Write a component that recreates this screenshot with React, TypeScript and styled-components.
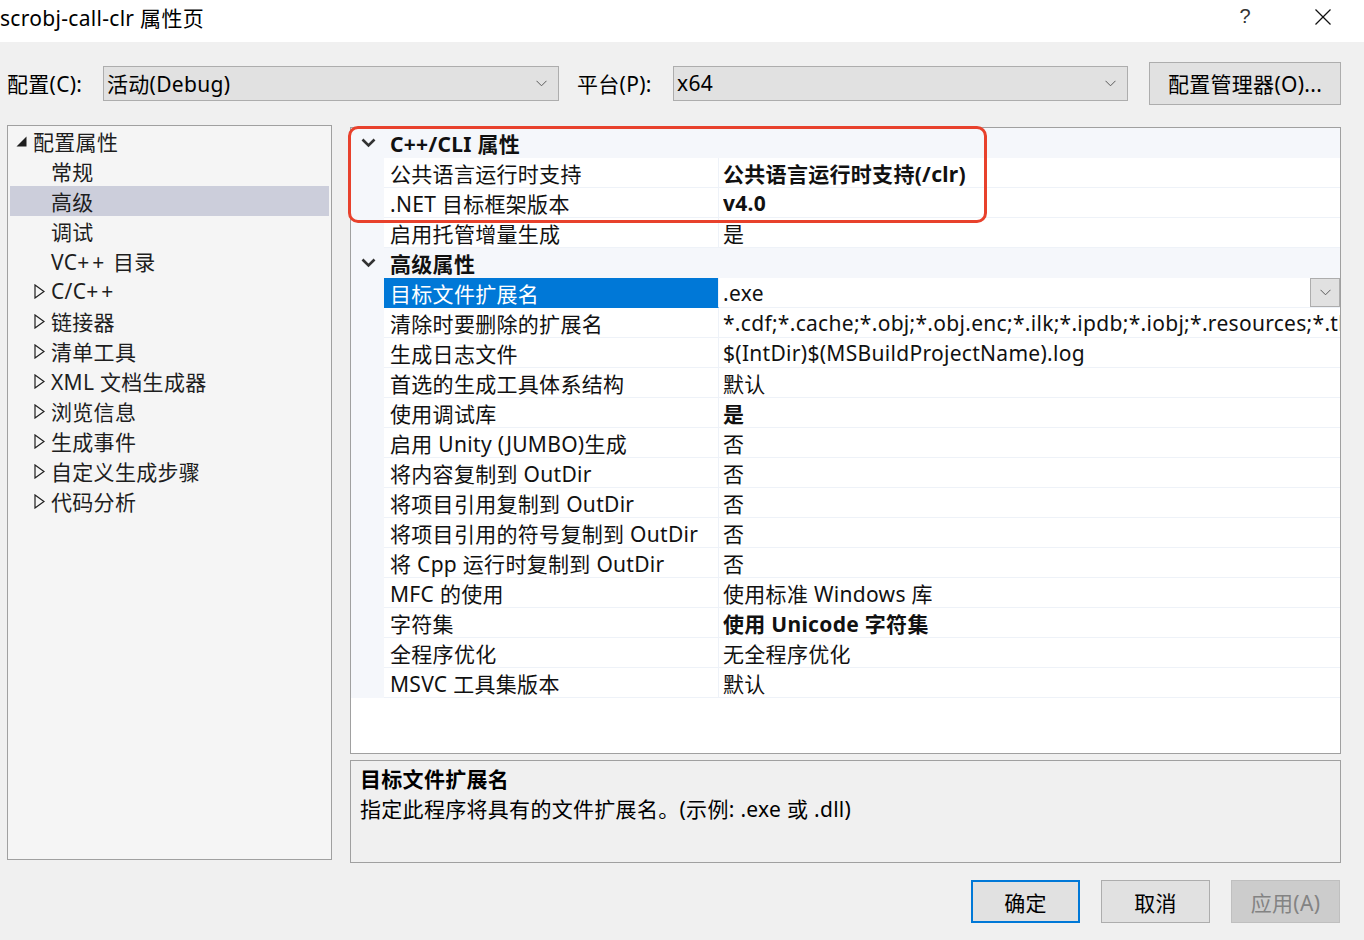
import React from "react";
import styled, { createGlobalStyle } from "styled-components";

const FONT = `"Noto Sans", "Noto Sans CJK SC", sans-serif`;

const GlobalStyle = createGlobalStyle`
  html, body {
    margin: 0;
    padding: 0;
    background: #f0f0f0;
  }
  body {
    font-family: ${FONT};
    font-size: 21px;
    letter-spacing: 0.3px;
    color: #000;
  }
`;

type Row =
  | { kind: "cat"; label: string }
  | { kind: "prop"; name: string; value: string; bold?: boolean; selected?: boolean };

const rows: Row[] = [
  { kind: "cat", label: "C++/CLI 属性" },
  { kind: "prop", name: "公共语言运行时支持", value: "公共语言运行时支持(/clr)", bold: true },
  { kind: "prop", name: ".NET 目标框架版本", value: "v4.0", bold: true },
  { kind: "prop", name: "启用托管增量生成", value: "是" },
  { kind: "cat", label: "高级属性" },
  { kind: "prop", name: "目标文件扩展名", value: ".exe", selected: true },
  {
    kind: "prop",
    name: "清除时要删除的扩展名",
    value: "*.cdf;*.cache;*.obj;*.obj.enc;*.ilk;*.ipdb;*.iobj;*.resources;*.tlb;*.tli;*.tlh",
  },
  { kind: "prop", name: "生成日志文件", value: "$(IntDir)$(MSBuildProjectName).log" },
  { kind: "prop", name: "首选的生成工具体系结构", value: "默认" },
  { kind: "prop", name: "使用调试库", value: "是", bold: true },
  { kind: "prop", name: "启用 Unity (JUMBO)生成", value: "否" },
  { kind: "prop", name: "将内容复制到 OutDir", value: "否" },
  { kind: "prop", name: "将项目引用复制到 OutDir", value: "否" },
  { kind: "prop", name: "将项目引用的符号复制到 OutDir", value: "否" },
  { kind: "prop", name: "将 Cpp 运行时复制到 OutDir", value: "否" },
  { kind: "prop", name: "MFC 的使用", value: "使用标准 Windows 库" },
  { kind: "prop", name: "字符集", value: "使用 Unicode 字符集", bold: true },
  { kind: "prop", name: "全程序优化", value: "无全程序优化" },
  { kind: "prop", name: "MSVC 工具集版本", value: "默认" },
];

const treeItems: { label: string; level: 0 | 1; expander?: "open" | "closed"; selected?: boolean }[] = [
  { label: "配置属性", level: 0, expander: "open" },
  { label: "常规", level: 1 },
  { label: "高级", level: 1, selected: true },
  { label: "调试", level: 1 },
  { label: "VC++ 目录", level: 1 },
  { label: "C/C++", level: 1, expander: "closed" },
  { label: "链接器", level: 1, expander: "closed" },
  { label: "清单工具", level: 1, expander: "closed" },
  { label: "XML 文档生成器", level: 1, expander: "closed" },
  { label: "浏览信息", level: 1, expander: "closed" },
  { label: "生成事件", level: 1, expander: "closed" },
  { label: "自定义生成步骤", level: 1, expander: "closed" },
  { label: "代码分析", level: 1, expander: "closed" },
];

const SmallChevron = () => (
  <svg width="11" height="7" viewBox="0 0 11 7">
    <polyline points="0.5,0.8 5.5,5.8 10.5,0.8" fill="none" stroke="#5a5a5a" strokeWidth="1" />
  </svg>
);

// the ++ in Segoe UI is set wide; mimic with a little tracking
const Plus = ({ text }: { text: string }) => {
  const parts = text.split(/(\+\+)/);
  return (
    <>
      {parts.map((p, i) => (p === "++" ? <Wide key={i}>++</Wide> : <React.Fragment key={i}>{p}</React.Fragment>))}
    </>
  );
};

const App = () => {
  return (
    <>
      <GlobalStyle />
      <Window>
        <TitleBar>
          <TitleText>scrobj-call-clr 属性页</TitleText>
          <TitleButtons>
            <HelpGlyph>?</HelpGlyph>
            <svg width="16" height="16" viewBox="0 0 16 16">
              <line x1="0.5" y1="0.5" x2="15.5" y2="15.5" stroke="#111" strokeWidth="1.2" />
              <line x1="15.5" y1="0.5" x2="0.5" y2="15.5" stroke="#111" strokeWidth="1.2" />
            </svg>
          </TitleButtons>
        </TitleBar>

        <Body>
          <ConfigRow>
            <FieldLabel>配置(C):</FieldLabel>
            <Combo width={456}>
              <span>活动(Debug)</span>
              <SmallChevron />
            </Combo>
            <FieldLabel style={{ marginLeft: 18 }}>平台(P):</FieldLabel>
            <Combo width={455}>
              <span>x64</span>
              <SmallChevron />
            </Combo>
            <PushButton width={192} style={{ marginLeft: 21 }}>
              配置管理器(O)...
            </PushButton>
          </ConfigRow>

          <MainArea>
            <TreePanel>
              {treeItems.map((item) => (
                <TreeRow key={item.label} selected={item.selected}>
                  <Expander level={item.level}>
                    {item.expander === "open" && (
                      <svg width="11" height="11" viewBox="0 0 11 11">
                        <polygon points="10.5,0.5 10.5,10.5 0.5,10.5" fill="#1e1e1e" />
                      </svg>
                    )}
                    {item.expander === "closed" && (
                      <svg width="11" height="15" viewBox="0 0 11 15">
                        <polygon points="1,1 10,7.5 1,14" fill="none" stroke="#1e1e1e" strokeWidth="1.2" />
                      </svg>
                    )}
                  </Expander>
                  <span>
                    <Plus text={item.label} />
                  </span>
                </TreeRow>
              ))}
            </TreePanel>

            <RightColumn>
              <GridPanel>
                {rows.map((row, i) =>
                  row.kind === "cat" ? (
                    <CatRow key={i}>
                      <Gutter>
                        <svg width="15" height="10" viewBox="0 0 15 10">
                          <polyline
                            points="1.5,1.5 7.5,7.5 13.5,1.5"
                            fill="none"
                            stroke="#333"
                            strokeWidth="2.6"
                          />
                        </svg>
                      </Gutter>
                      <CatLabel>{row.label}</CatLabel>
                    </CatRow>
                  ) : (
                    <PropRow key={i}>
                      <Gutter />
                      <NameCell selected={row.selected}>{row.name}</NameCell>
                      <ValueCell bold={row.bold}>
                        <ValueText>{row.value}</ValueText>
                        {row.selected && (
                          <DropButton>
                            <SmallChevron />
                          </DropButton>
                        )}
                      </ValueCell>
                    </PropRow>
                  )
                )}
                <Highlight />
              </GridPanel>

              <DescPanel>
                <DescTitle>目标文件扩展名</DescTitle>
                <DescText>指定此程序将具有的文件扩展名。(示例: .exe 或 .dll)</DescText>
              </DescPanel>
            </RightColumn>
          </MainArea>

          <ButtonRow>
            <PushButton width={109} primary>
              确定
            </PushButton>
            <PushButton width={109}>取消</PushButton>
            <PushButton width={109} disabled>
              应用(A)
            </PushButton>
          </ButtonRow>
        </Body>
      </Window>
    </>
  );
};

export default App;

const Window = styled.div`
  width: 1364px;
  height: 940px;
  display: flex;
  flex-direction: column;
  background: #f0f0f0;
  overflow: hidden;
`;

const TitleBar = styled.div`
  height: 42px;
  background: #ffffff;
  display: flex;
  align-items: center;
  justify-content: space-between;
  padding-bottom: 9px;
  box-sizing: border-box;
`;

const TitleText = styled.div`
  font-size: 21px;
  padding-left: 0;
  color: #000;
`;

const TitleButtons = styled.div`
  display: flex;
  align-items: center;
  gap: 64px;
  padding-right: 33px;
`;

const HelpGlyph = styled.span`
  font-size: 20px;
  color: #333;
  font-family: "Liberation Sans", sans-serif;
`;

const Wide = styled.span`
  letter-spacing: 3px;
`;

const Body = styled.div`
  flex: 1;
  display: flex;
  flex-direction: column;
  padding: 20px 23px 0 7px;
`;

const ConfigRow = styled.div`
  display: flex;
  align-items: center;
  height: 42px;
`;

const FieldLabel = styled.span`
  font-size: 21px;
  width: 96px;
  white-space: nowrap;
`;

const Combo = styled.div<{ width: number }>`
  width: ${(p) => p.width}px;
  height: 35px;
  box-sizing: border-box;
  background: #e1e1e1;
  border: 1px solid #adadad;
  display: flex;
  align-items: center;
  justify-content: space-between;
  padding: 0 11px 0 3px;
  font-size: 21px;
`;

const PushButton = styled.div<{ width: number; primary?: boolean; disabled?: boolean }>`
  width: ${(p) => p.width}px;
  height: 43px;
  box-sizing: border-box;
  display: flex;
  align-items: center;
  justify-content: center;
  font-size: 21px;
  background: ${(p) => (p.disabled ? "#cccccc" : "#e1e1e1")};
  color: ${(p) => (p.disabled ? "#838383" : "#000")};
  border: ${(p) => (p.primary ? "2px solid #0078d7" : p.disabled ? "1px solid #bfbfbf" : "1px solid #adadad")};
`;

const MainArea = styled.div`
  display: flex;
  margin-top: 21px;
  gap: 18px;
`;

const TreePanel = styled.div`
  width: 326px;
  height: 735px;
  box-sizing: border-box;
  background: #f5f5f5;
  border: 1px solid #a0a0a0;
  padding: 0 1px;
`;

const TreeRow = styled.div<{ selected?: boolean }>`
  height: 30px;
  display: flex;
  align-items: center;
  margin: 0 1px;
  background: ${(p) => (p.selected ? "#cccedb" : "transparent")};
  font-size: 21px;
  color: #1e1e1e;
  white-space: nowrap;
`;

const Expander = styled.span<{ level: 0 | 1 }>`
  display: inline-flex;
  align-items: center;
  justify-content: flex-start;
  width: ${(p) => (p.level === 0 ? 23 : 41)}px;
  padding-left: ${(p) => (p.level === 0 ? 6 : 24)}px;
  box-sizing: border-box;
`;

const RightColumn = styled.div`
  width: 991px;
  display: flex;
  flex-direction: column;
  gap: 6px;
  padding-top: 2px;
`;

const GridPanel = styled.div`
  position: relative;
  height: 627px;
  box-sizing: border-box;
  background: #ffffff;
  border: 1px solid #a0a0a0;
  padding-top: 0;
  overflow: visible;
`;

const Highlight = styled.div`
  position: absolute;
  left: -3px;
  top: -2px;
  width: 639px;
  height: 97px;
  box-sizing: border-box;
  border: 3px solid #e8412c;
  border-radius: 10px;
  pointer-events: none;
`;

const BaseRow = styled.div`
  height: 30px;
  display: flex;
  align-items: stretch;
  overflow: hidden;
  white-space: nowrap;
`;

const CatRow = styled(BaseRow)`
  background: #f5f7fb;
`;

const PropRow = styled(BaseRow)`
  background: #ffffff;
`;

const Gutter = styled.div`
  width: 33px;
  flex: none;
  background: #f5f7fb;
  display: flex;
  align-items: center;
  justify-content: center;
  padding-left: 2px;
  box-sizing: border-box;
`;

const CatLabel = styled.div`
  display: flex;
  align-items: center;
  padding-left: 6px;
  font-weight: bold;
  font-size: 21px;
  color: #111;
`;

const NameCell = styled.div<{ selected?: boolean }>`
  width: 335px;
  flex: none;
  box-sizing: border-box;
  display: flex;
  align-items: center;
  padding-left: 6px;
  font-size: 21px;
  background: ${(p) => (p.selected ? "#0078d7" : "#ffffff")};
  color: ${(p) => (p.selected ? "#ffffff" : "#111")};
  border-right: 1px solid #eef2f8;
  border-bottom: 1px solid ${(p) => (p.selected ? "#0078d7" : "#eef2f8")};
  overflow: hidden;
`;

const ValueCell = styled.div<{ bold?: boolean }>`
  flex: 1;
  min-width: 0;
  display: flex;
  align-items: center;
  justify-content: space-between;
  padding-left: 4px;
  font-size: 21px;
  font-weight: ${(p) => (p.bold ? "bold" : "normal")};
  color: #111;
  border-bottom: 1px solid #eef2f8;
  overflow: hidden;
`;

const ValueText = styled.span`
  overflow: hidden;
  white-space: nowrap;
`;

const DropButton = styled.div`
  flex: none;
  width: 30px;
  height: 29px;
  box-sizing: border-box;
  background: #e1e1e1;
  border: 1px solid #adadad;
  display: flex;
  align-items: center;
  justify-content: center;
`;

const DescPanel = styled.div`
  height: 103px;
  box-sizing: border-box;
  background: #f0f0f0;
  border: 1px solid #a0a0a0;
  padding: 3px 9px;
`;

const DescTitle = styled.div`
  font-size: 21px;
  font-weight: bold;
  line-height: 30px;
`;

const DescText = styled.div`
  font-size: 21px;
  line-height: 30px;
`;

const ButtonRow = styled.div`
  display: flex;
  justify-content: flex-end;
  gap: 21px;
  margin-top: 17px;
  padding-right: 1px;
`;
